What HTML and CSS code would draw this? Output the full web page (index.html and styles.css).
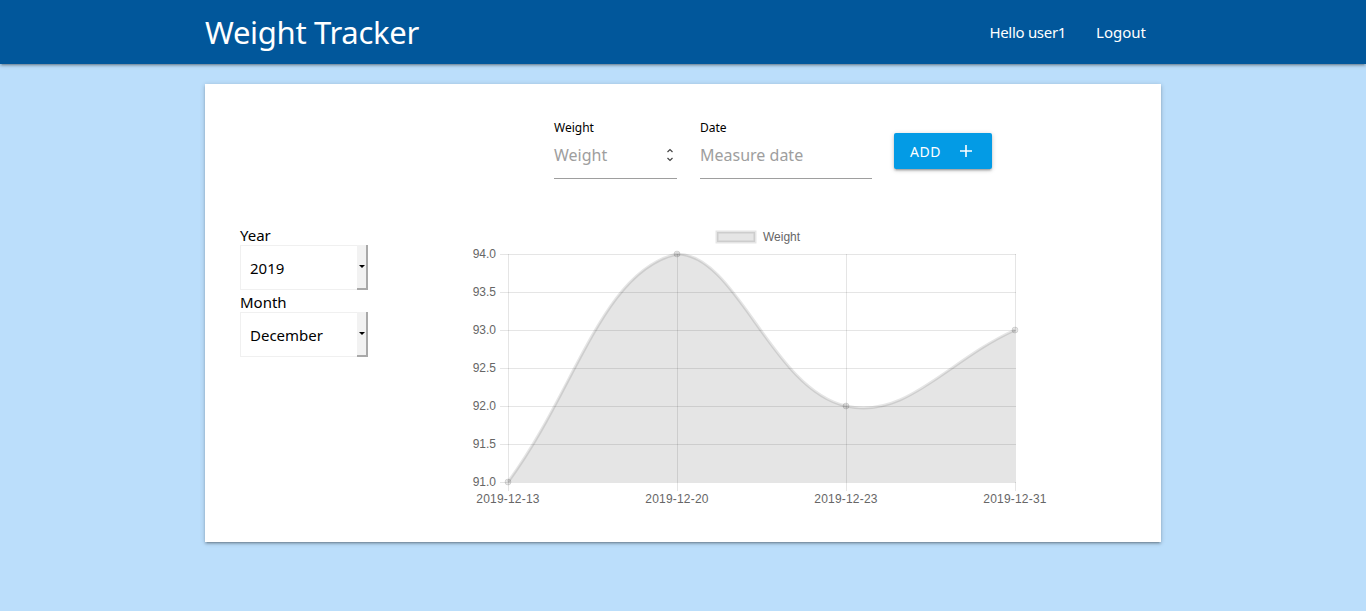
FILE: index.html
```html
<!DOCTYPE html>
<html lang="en">
<head>
<meta charset="utf-8">
<title>Weight Tracker</title>
<link rel="stylesheet" href="styles.css">
</head>
<body>
<header class="topbar">
  <div class="container topbar-inner">
    <a class="brand" href="#">Weight Tracker</a>
    <nav class="links">
      <span class="hello">Hello user1</span>
      <a href="#" class="logout">Logout</a>
    </nav>
  </div>
</header>
<main class="container">
  <section class="card">
    <form class="entry">
      <div class="field weight">
        <label>Weight</label>
        <div class="input">
          <span class="placeholder">Weight</span>
          <svg class="spin" width="8" height="16" viewBox="0 0 8 16"><path d="M1.5 5 L4 2.5 L6.5 5 M1.5 11 L4 13.5 L6.5 11" fill="none" stroke="#444" stroke-width="1.2"/></svg>
        </div>
      </div>
      <div class="field date">
        <label>Date</label>
        <div class="input"><span class="placeholder">Measure date</span></div>
      </div>
      <button type="button" class="add">ADD <svg width="12" height="12" viewBox="0 0 12 12"><path d="M6 0 V12 M0 6 H12" stroke="#fff" stroke-width="1.6"/></svg></button>
    </form>
    <div class="content">
      <aside class="filters">
        <label class="flabel">Year</label>
        <div class="select"><span>2019</span><span class="caret"></span></div>
        <label class="flabel">Month</label>
        <div class="select"><span>December</span><span class="caret"></span></div>
      </aside>
      <svg class="chart" width="600" height="290" viewBox="0 0 600 290">
        <g transform="translate(-455,-222)" font-family="Liberation Sans, Arial, sans-serif" font-size="12" fill="#666">
          <rect x="717" y="232" width="38" height="10" fill="rgba(0,0,0,0.1)" stroke="rgba(0,0,0,0.1)" stroke-width="3"/>
          <text x="763" y="241">Weight</text>
          <g stroke="rgba(0,0,0,0.1)" stroke-width="1" shape-rendering="crispEdges">
            <line x1="500" y1="254.5" x2="1016" y2="254.5"/>
            <line x1="500" y1="292.5" x2="1016" y2="292.5"/>
            <line x1="500" y1="330.5" x2="1016" y2="330.5"/>
            <line x1="500" y1="368.5" x2="1016" y2="368.5"/>
            <line x1="500" y1="406.5" x2="1016" y2="406.5"/>
            <line x1="500" y1="444.5" x2="1016" y2="444.5"/>
            <line x1="500" y1="482.5" x2="1016" y2="482.5"/>
            <line x1="508.5" y1="254" x2="508.5" y2="491"/>
            <line x1="677.5" y1="254" x2="677.5" y2="491"/>
            <line x1="846.5" y1="254" x2="846.5" y2="491"/>
            <line x1="1015.5" y1="254" x2="1015.5" y2="491"/>
          </g>
          <g text-anchor="end">
            <text x="496" y="258">94.0</text>
            <text x="496" y="296">93.5</text>
            <text x="496" y="334">93.0</text>
            <text x="496" y="372">92.5</text>
            <text x="496" y="410">92.0</text>
            <text x="496" y="448">91.5</text>
            <text x="496" y="486">91.0</text>
          </g>
          <g text-anchor="middle" letter-spacing="0.2">
            <text x="508" y="503">2019-12-13</text>
            <text x="677" y="503">2019-12-20</text>
            <text x="846" y="503">2019-12-23</text>
            <text x="1015" y="503">2019-12-31</text>
          </g>
          <path d="M508,482 C575.6,390.8 601.9,270.9 677,254 C737.1,254 771.5,389.25 846,406 C906.7,419.65 947.4,360.4 1015,330 L1015,482 Z" fill="rgba(0,0,0,0.1)"/>
          <path d="M508,482 C575.6,390.8 601.9,270.9 677,254 C737.1,254 771.5,389.25 846,406 C906.7,419.65 947.4,360.4 1015,330" fill="none" stroke="rgba(0,0,0,0.1)" stroke-width="3"/>
          <g fill="rgba(0,0,0,0.1)" stroke="rgba(0,0,0,0.1)" stroke-width="1">
            <circle cx="508" cy="482" r="3"/>
            <circle cx="677" cy="254" r="3"/>
            <circle cx="846" cy="406" r="3"/>
            <circle cx="1015" cy="330" r="3"/>
          </g>
        </g>
      </svg>
    </div>
  </section>
</main>
</body>
</html>
```

FILE: styles.css
```css
* { box-sizing: border-box; }
html, body { margin: 0; padding: 0; }
body {
  background: #bbdefb;
  font-family: "Noto Sans", "Open Sans", sans-serif;
  color: #000;
  height: 611px;
  overflow: hidden;
}
.container {
  width: 956px;
  margin: 0 auto;
}
.topbar {
  background: #01579b;
  height: 64px;
  box-shadow: 0 2px 2px 0 rgba(0,0,0,0.14), 0 3px 1px -2px rgba(0,0,0,0.12), 0 1px 5px 0 rgba(0,0,0,0.2);
}
.topbar-inner {
  height: 64px;
  display: flex;
  align-items: center;
  justify-content: space-between;
}
.brand {
  color: #fff;
  text-decoration: none;
  font-size: 31px;
  letter-spacing: -0.3px;
}
.links {
  display: flex;
  gap: 30px;
  padding-right: 15px;
  font-size: 15px;
  color: #fff;
}
.hello { letter-spacing: -0.3px; }
.links a { color: #fff; text-decoration: none; }

.card {
  margin-top: 20px;
  background: #fff;
  height: 458px;
  padding: 36px 0 0 35px;
  box-shadow: 0 2px 2px 0 rgba(0,0,0,0.14), 0 3px 1px -2px rgba(0,0,0,0.12), 0 1px 5px 0 rgba(0,0,0,0.2);
}
.entry {
  display: flex;
  align-items: flex-start;
  margin-left: 314px;
}
.field { display: flex; flex-direction: column; }
.field.weight { width: 123px; margin-right: 23px; }
.field.date { width: 172px; margin-right: 22px; }
.field label {
  font-size: 12px;
  line-height: 16px;
  color: #000;
}
.input {
  height: 43px;
  padding-bottom: 4px;
  border-bottom: 1px solid #9e9e9e;
  display: flex;
  align-items: center;
  justify-content: space-between;
}
.placeholder {
  font-size: 16px;
  color: #9e9e9e;
}
.spin { margin-right: 3px; }
.add {
  margin-top: 13px;
  width: 98px;
  height: 36px;
  background: #039be5;
  border: none;
  border-radius: 2px;
  color: #fff;
  font-family: inherit;
  font-size: 14px;
  letter-spacing: 0.5px;
  display: flex;
  align-items: center;
  justify-content: flex-start;
  gap: 19px;
  padding: 0 0 0 16px;
  box-shadow: 0 2px 2px 0 rgba(0,0,0,0.14), 0 3px 1px -2px rgba(0,0,0,0.12), 0 1px 5px 0 rgba(0,0,0,0.2);
}
.content {
  display: flex;
  margin-top: 43px;
}
.filters {
  width: 215px;
  padding-top: 3px;
  display: flex;
  flex-direction: column;
  align-items: flex-start;
}
.flabel {
  font-size: 15px;
  line-height: 20px;
  color: #000;
}
.select {
  width: 128px;
  height: 45px;
  border: 1px solid #f0f0f0;
  display: flex;
  align-items: center;
  justify-content: space-between;
  font-size: 15px;
  padding-left: 9px;
  margin-bottom: 2px;
  position: relative;
}
.caret {
  width: 11px;
  height: 45px;
  margin-right: -1px;
  background: #f2f2f2;
  border-right: 2px solid #a9a9a9;
  border-bottom: 2px solid #a9a9a9;
  position: relative;
}
.caret::after {
  content: "";
  position: absolute;
  left: 2px;
  top: 20px;
  border-left: 3px solid transparent;
  border-right: 3px solid transparent;
  border-top: 3px solid #000;
}
.chart { display: block; }
```
